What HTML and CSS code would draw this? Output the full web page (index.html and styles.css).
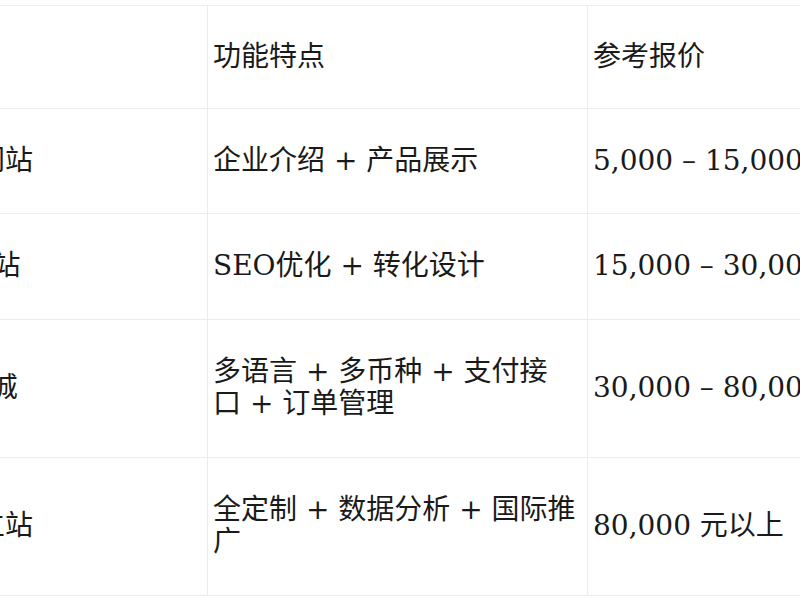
FILE: index.html
```html
<!DOCTYPE html>
<html lang="zh-CN">
<head>
<meta charset="utf-8">
<title>网站建设报价</title>
<link rel="stylesheet" href="styles.css">
</head>
<body>
<div class="viewport">
  <table class="price-table">
    <colgroup>
      <col class="col-type">
      <col class="col-feature">
      <col class="col-price">
    </colgroup>
    <thead>
      <tr>
        <th>网站类型</th>
        <th>功能特点</th>
        <th>参考报价</th>
      </tr>
    </thead>
    <tbody>
      <tr>
        <td>企业展示型网站</td>
        <td>企业介绍 + 产品展示</td>
        <td class="price">5,000 – 15,000 元</td>
      </tr>
      <tr>
        <td>SEO 营销网站</td>
        <td>SEO优化 + 转化设计</td>
        <td class="price">15,000 – 30,000 元</td>
      </tr>
      <tr>
        <td>B2C 外贸商城</td>
        <td>多语言 + 多币种 + 支付接口&nbsp;+&nbsp;订单管理</td>
        <td class="price">30,000 – 80,000 元</td>
      </tr>
      <tr>
        <td>高端定制独立站</td>
        <td>全定制 + 数据分析 + 国际推广</td>
        <td class="price">80,000 元以上</td>
      </tr>
    </tbody>
  </table>
</div>
</body>
</html>
```

FILE: styles.css
```css
html, body {
  margin: 0;
  padding: 0;
  background: #ffffff;
  overflow: hidden;
}

.viewport {
  width: 800px;
  height: 600px;
  overflow: hidden;
  padding-top: 5px;
  box-sizing: border-box;
}

.price-table {
  margin-left: -169px;
  border-collapse: collapse;
  table-layout: fixed;
  width: 1060px;
  font-family: "DejaVu Serif", "Noto Sans CJK SC", serif;
  font-size: 28px;
  line-height: 32.5px;
  color: #1a1a1a;
}

.col-type { width: 376px; }
.col-feature { width: 380px; }
.col-price { width: 304px; }

.price-table th,
.price-table td {
  border: 1px solid #ececec;
  padding: 36px 5px;
  text-align: left;
  vertical-align: middle;
  font-weight: normal;
}

.price-table th {
  padding-top: 35px;
  padding-bottom: 34px;
}

.price {
  white-space: nowrap;
}
```
